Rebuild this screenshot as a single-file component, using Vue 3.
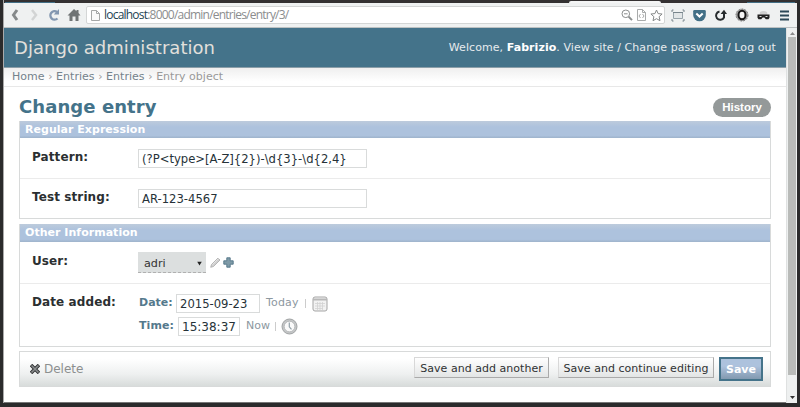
<script setup>
const account = { name: 'Fabrizio' }
const crumbs = ['Home', 'Entries', 'Entries']
const fields = [
  { label: 'Pattern:', value: '(?P<type>[A-Z]{2})-\\d{3}-\\d{2,4}' },
  { label: 'Test string:', value: 'AR-123-4567' }
]
</script>

<template>
  <div class="window">
    <div class="tabstrip"><i class="tab-left"></i><i class="tab-mid"></i><i class="tab-right"></i></div>
    <div class="toolbar">
      <div class="nav-icons">
        <svg width="10" height="14" viewBox="0 0 10 14"><path d="M7 2 3.500 7l3.500 5" fill="none" stroke="#85898a" stroke-width="3" /></svg>
        <svg width="10" height="14" viewBox="0 0 10 14"><path d="m3 2 4 5-4 5" fill="none" stroke="#d2d4d4" stroke-width="2.500" /></svg>
        <svg width="12" height="14" viewBox="0 0 12 14"><path d="M9.500 10.500A4.200 4.200 0 1 1 9 4" fill="none" stroke="#8397b0" stroke-width="2.400" /><path d="M11 1v5.500H5.800z" fill="#8397b0" /></svg>
        <svg width="14" height="14" viewBox="0 0 14 14"><path d="M7 1 .5 7.500h2V13h9V7.500h2L11.500 5V2h-2v1.300z" fill="#707475" /><path d="M5.500 8.500h3V13h-3z" fill="#eceeee" /></svg>
      </div>
      <div class="address">
        <svg class="page" width="9" height="11" viewBox="0 0 9 11"><path d="M.5.5h5l3 3v7h-8zM5.500.5v3h3" fill="#fafafa" stroke="#a5a7a7" /></svg>
        <span class="url"><b>localhost</b>:8000/admin/entries/entry/3/</span>
        <span class="address-icons">
          <svg width="12" height="12" viewBox="0 0 12 12" fill="none" stroke="#8b8e8e"><circle cx="4.800" cy="4.800" r="3.800" /><path d="M3 4.800h3.600" /><path d="m7.600 7.600 3.400 3.500" stroke-width="2" /></svg>
          <svg width="9" height="12" viewBox="0 0 9 12" fill="none" stroke="#a9abab"><path d="M.5.5h5l3 3v8h-8zM5.500.5v3h3M3.500 5 2 7l1.500 2M5.500 5 7 7 5.500 9" /></svg>
          <svg width="13" height="13" viewBox="0 0 13 13"><path d="m6.500 1 1.600 3.600 4 .4-3 2.700.9 4-3.500-2-3.500 2 .9-4-3-2.700 4-.4z" fill="#fff" stroke="#858888" /></svg>
        </span>
      </div>
      <div class="extensions">
        <svg width="14" height="13" viewBox="0 0 14 13"><path d="M2.500 3.500h9v6h-9z" fill="#e2e6e7" stroke="#98a4aa" /><path d="M2 3.500h10" stroke="#78858c" /><path d="M1 3V1h1.500M11.500 1H13v2M1 10v2h1.500M11.500 12H13v-2" fill="none" stroke="#78858c" /></svg>
        <svg width="13" height="13" viewBox="0 0 13 13"><path d="M1.500 1h10q1.300 0 1.300 1.300V6a6.300 6.300 0 0 1-12.600 0V2.300Q.2 1 1.500 1z" fill="#426f86" /><path d="m3.300 4.600 3.200 3 3.200-3" fill="none" stroke="#fff" stroke-width="2" /></svg>
        <svg width="13" height="13" viewBox="0 0 13 13"><path d="M5.500 2.500a4.200 4.200 0 1 0 4.500 6V3.500" fill="none" stroke="#272b2d" stroke-width="2" /><path d="m6.600 5 3.400-4.300L13 5z" fill="#272b2d" /></svg>
        <svg width="14" height="14" viewBox="0 0 14 14"><circle cx="7" cy="7" r="6" fill="#aaa" stroke="#777" stroke-dasharray="2 1" /><ellipse cx="7" cy="7" rx="3.500" ry="4.300" fill="#f5f5f5" stroke="#171717" stroke-width="2" /></svg>
        <svg width="13" height="13" viewBox="0 0 13 13"><path d="M3 3q3.500-2 7 0l.5 3h-8z" fill="#d0d0d0" /><path d="M.5 5.500h12v3.300l-1 1.400H8.800L7.300 8.500H5.700l-1.500 1.700H1.500l-1-1.400z" fill="#222" /><path d="M2.500 7.500h2M8.500 7.500h2" stroke="#ddd" /></svg>
        <svg class="menu" width="9" height="11" viewBox="0 0 9 11"><path d="M0 1.500h9M0 5.500h9M0 9.500h9" stroke="#2c4856" stroke-width="2" /></svg>
      </div>
    </div>

    <div class="viewport">
      <div class="page-body">
        <header class="site-header">
          <span class="brand">Django administration</span>
          <span class="user-tools">Welcome, <b>{{ account.name }}</b>. <a>View site</a> / <a>Change password</a> / <a>Log out</a></span>
        </header>
        <nav class="breadcrumbs"><template v-for="(c, i) in crumbs" :key="i"><a>{{ c }}</a> › </template>Entry object</nav>

        <main class="content">
          <div class="title-row">
            <h1>Change entry</h1>
            <a class="history">History</a>
          </div>

          <section class="module">
            <h2>Regular Expression</h2>
            <div v-for="f in fields" :key="f.label" class="row text-row">
              <label class="field-label">{{ f.label }}</label>
              <div class="box wide">{{ f.value }}</div>
            </div>
          </section>

          <section class="module other">
            <h2>Other Information</h2>
            <div class="row user-row">
              <label class="field-label">User:</label>
              <div class="select"><span>adri</span><svg width="5" height="5" viewBox="0 0 6 5"><path d="M.3.300h5.400L3 5z" fill="#222" /></svg></div>
              <svg class="pencil" width="11" height="11" viewBox="0 0 11 11"><path d="M.7 10.300 1.500 7.500 8 1l2 2-6.500 6.500z" fill="#d0d0d0" stroke="#aaa" stroke-width=".8" /><path d="m2.500 7.500 6-6" stroke="#e4e4e4" /></svg>
              <svg class="plus" width="11" height="11" viewBox="0 0 11 11"><path d="M3.800.8h3.400v3h3v3.400h-3v3H3.800v-3h-3V3.800h3z" fill="#7f9aa7" stroke="#517487" stroke-width=".9" /></svg>
            </div>
            <div class="row date-row">
              <label class="field-label">Date added:</label>
              <div class="datetime">
                <div class="line">
                  <span class="sub date">Date:</span><div class="box date-box">2015-09-23</div><a class="shortcut today">Today</a><i class="bar"></i>
                  <svg width="16" height="16" viewBox="0 0 16 16"><rect x="1" y="1" width="14" height="14" rx="2" fill="#f2f2f2" stroke="#a5a5a5" /><path d="M1 2.500h14v2H1z" fill="#b8b8b8" /><path d="M3 7.500h10M3 10h10M3 12.500h8M5.500 6v8M8 6v8M10.500 6v8" stroke="#d2d2d2" stroke-width=".8" /></svg>
                </div>
                <div class="line">
                  <span class="sub time">Time:</span><div class="box time-box">15:38:37</div><a class="shortcut now">Now</a><i class="bar"></i>
                  <svg class="clock" width="17" height="17" viewBox="0 0 17 17"><circle cx="8.500" cy="8.500" r="7.500" fill="#c4c6c7" stroke="#a0a3a4" /><circle cx="8.500" cy="8.500" r="5.300" fill="#fafafa" stroke="#a9acad" stroke-width=".7" /><path d="M8.300 4.500v4.300l2.200 2.500" fill="none" stroke="#92a0a8" stroke-width="1.200" /></svg>
                </div>
              </div>
            </div>
          </section>

          <div class="submit-row">
            <a class="delete"><svg width="10" height="10" viewBox="0 0 10 10"><path d="m1 1 8 8M9 1 1 9" stroke="#303233" stroke-width="3.500" /><path d="m1.500 1.500 7 7M8.500 1.500l-7 7" stroke="#8b8e8f" stroke-width="1.700" /></svg><span>Delete</span></a>
            <button class="another">Save and add another</button>
            <button class="continue">Save and continue editing</button>
            <button class="save">Save</button>
          </div>
        </main>
      </div>
      <div class="scrollbar">
        <svg width="5" height="3" viewBox="0 0 5 3"><path d="M0 3h5L2.500 0z" fill="#8b8b8b" /></svg>
        <div class="thumb"></div>
        <svg class="down" width="5" height="3" viewBox="0 0 5 3"><path d="M0 0h5L2.500 3z" fill="#333" /></svg>
      </div>
    </div>
  </div>
</template>

<style>
body { margin: 0; background: #302d2e; overflow: hidden; }
</style>

<style scoped>
* { box-sizing: border-box; }
svg { display: block; flex: none; }
.window { width: 800px; height: 407px; border-style: solid; border-color: #2b2b2c; border-width: 0 3px 4px 3px; background: #fff; display: flex; flex-direction: column; font-family: "DejaVu Sans", sans-serif; font-size: 12px; color: #333; white-space: nowrap; box-shadow: inset 1px 0 #aaa, inset 0 -1px #777; padding-left: 1px; }
.tabstrip { height: 3px; background: #343132; display: flex; align-items: flex-end; flex: none; }
.tab-left { width: 50px; height: 1px; background: #426f86; margin-left: 1px; }
.tab-mid { width: 92px; height: 2px; background: #f4f5f5; margin-left: 514px; border-radius: 2px 2px 0 0; }
.tab-mid + .tab-right { margin-left: 86px; }
.tab-right { width: 48px; height: 1px; background: #426f86; }
.toolbar { height: 25px; background: #eff1f1; border-bottom: 1px solid #bdc1c2; display: flex; align-items: center; flex: none; }
.nav-icons { display: flex; gap: 9px; padding-left: 6px; width: 82px; }
.nav-icons svg:nth-child(4) { margin-left: -2px; }
.address { width: 579px; height: 18px; border: 1px solid #d4d6d6; border-radius: 2px; background: #fff; display: flex; align-items: center; padding-left: 4px; }
.url { font: 12px/16px "Open Sans", sans-serif; color: #8b8d8e; margin-left: 4px; letter-spacing: -.78px; }
.url b { font-weight: 400; color: #244452; }
.address-icons { display: flex; gap: 4px; align-items: center; margin-left: auto; padding-right: 1px; }
.extensions { display: flex; align-items: center; gap: 8px; padding-left: 6px; }
.menu { margin-left: 2px; }
.viewport { display: flex; flex: 1; min-height: 0; }
.page-body { width: 782px; }
.site-header { height: 40px; background: #44738a; border-bottom: 1px solid #8c9fa9; display: flex; align-items: center; justify-content: space-between; padding: 0 10px 1px 10px; color: #e7ebee; }
.brand { font-size: 18px; letter-spacing: .04px; color: #e2e0dc; }
.user-tools { font-size: 11px; letter-spacing: .07px; }
.user-tools b { color: #fff; }
.breadcrumbs { height: 19px; border-bottom: 1px solid #e8e8e8; background: linear-gradient(#efefef, #fff 75%); padding-left: 8px; font-size: 11px; line-height: 17px; letter-spacing: .03px; color: #999; }
.breadcrumbs a { color: #74828b; }
.content { padding: 0 15px; }
.title-row { height: 34px; display: flex; justify-content: space-between; }
h1 { margin: 8px 0 0; font-size: 18px; line-height: 24px; letter-spacing: .08px; color: #44738a; }
.history { width: 58px; height: 19px; margin-top: 11px; border-radius: 10px; background: #949999; color: #fff; font: bold 11.5px/19px "Liberation Sans", sans-serif; text-align: center; }
.module { border: 1px solid #d8dada; border-top: 0; height: 98px; }
.module.other { height: 123px; margin-top: 5px; }
h2 { margin: 0; height: 17px; padding-left: 5px; background: linear-gradient(#bdcbdc, #adc2dd 35%, #adc2dd 85%, #9eb3cb); color: #fff; font-size: 11px; line-height: 17px; letter-spacing: .03px; }
.other h2 { height: 18px; line-height: 18px; }
.row { display: flex; padding-left: 12px; }
.row + .row { border-top: 1px solid #ebebeb; }
.text-row { height: 40px; padding-top: 11px; }
.text-row + .text-row { padding-top: 10px; }
.field-label { width: 107px; font-weight: bold; font-size: 12px; line-height: 15px; letter-spacing: .1px; color: #2b2f31; }
.box { border: 1px solid #d9dbdb; background: #fff; height: 19px; font-size: 11.6px; line-height: 19px; padding-left: 3px; color: #263238; }
.wide { width: 229px; }
.wide, .select { margin-left: -1px; }
.text-row .field-label { height: 15px; margin-top: 1px; }
.text-row .wide { line-height: 19px; }
.user-row { height: 41px; padding-top: 10px; }
.user-row .field-label { margin-top: 2px; }
.select { width: 68px; height: 21px; background: #dcdfdf; border-bottom: 1px dashed #b0b0b0; display: flex; align-items: center; justify-content: space-between; padding: 2px 4px 0 6px; font-size: 11.2px; }
.pencil { margin: 5px 0 0 4px; }
.plus { margin: 5px 0 0 2px; }
.date-row { padding-top: 10px; }
.date-row .field-label { margin-top: 1px; }
.datetime { display: flex; flex-direction: column; gap: 4px; }
.line { display: flex; height: 19px; align-items: center; }
.line .box { line-height: 19px; padding-left: 3px; letter-spacing: 0; }
.line svg { margin-left: 6px; margin-top: 1px; }
.line .clock { margin-left: 5px; margin-top: -1px; }
.sub { font-weight: bold; font-size: 11px; color: #55798c; margin-top: -2px; }
.date { width: 37px; }
.time { width: 39px; letter-spacing: .1px; }
.date-box { width: 84px; }
.line .time-box { width: 62px; font-size: 12px; }
.time-box, .date-box { flex: none; }
.shortcut { font-size: 11px; color: #8d989f; margin: -2px 5px 0 6px; }
.today { letter-spacing: .15px; margin-right: 6px; }
.bar { width: 1px; height: 9px; background: #ccc; }
.submit-row { height: 36px; margin-top: 4px; border: 1px solid #d8dada; background: linear-gradient(#fff 20%, #eef0f0 65%, #d8dcdb); display: flex; align-items: flex-start; padding: 5px 7px 0 10px; }
.delete { display: flex; align-items: center; gap: 4px; color: #8c8f8f; font-size: 12px; margin: 5px auto 0 0; }
button { font: 11px/20px "DejaVu Sans", sans-serif; letter-spacing: .03px; height: 21px; padding: 1px 0 0; text-align: center; color: #303233; border: 1px solid #d8d8d8; border-right-color: #aaa; border-bottom-color: #aaa; background: linear-gradient(#fff, #e3e5e5); white-space: nowrap; }
.another { width: 135px; margin-right: 9px; }
.continue { width: 156px; margin-right: 5px; }
.save { width: 44px; height: 24px; border: 2px solid #44738a; background: linear-gradient(#adc2dd 35%, #8299b0); color: #fff; font-weight: bold; }
.scrollbar { width: 11px; background: #eef0f0; border-left: 1px solid #dfe1e1; display: flex; flex-direction: column; align-items: center; padding-top: 4px; }
.thumb { width: 8px; height: 338px; margin-top: 2px; background: #b9bbb9; }
.down { margin-top: 21px; }
</style>
